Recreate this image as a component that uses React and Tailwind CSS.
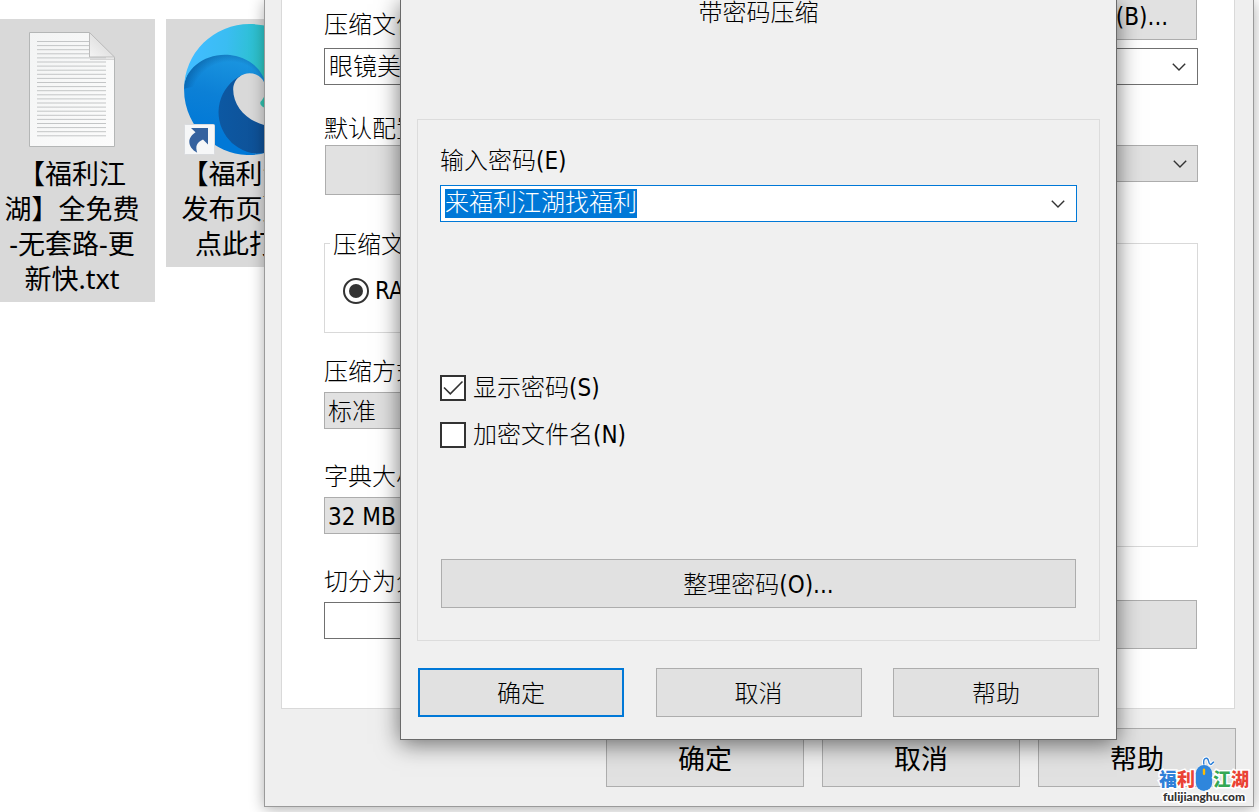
import React, { useEffect, useRef } from "react";

const dialogFont = "font-['DejaVu_Sans_Condensed','Noto_Sans_CJK_SC',sans-serif] font-light text-[24px] leading-[28px] text-black";
const shellFont = "font-['Noto_Sans','Noto_Sans_CJK_SC',sans-serif] text-[27px] leading-[35px] text-black";
const button = "flex items-center justify-center border border-[#adadad] bg-[#e1e1e1]";

function Chevron() {
  return (
    <svg className="pointer-events-none h-2 w-3.5 shrink-0" viewBox="0 0 14 8" fill="none" stroke="#333" strokeWidth="1.4" aria-hidden="true">
      <path d="M.8.8 7 7 13.2.8" />
    </svg>
  );
}

function Select({ id, options, className = "" }) {
  return (
    <div className={"grid h-[37px] items-center " + className}>
      <select id={id} className="col-start-1 row-start-1 h-full w-full appearance-none border border-[#adadad] bg-[#e1e1e1] px-[3px] pt-0.5">
        {options.map((o) => (
          <option key={o}>{o}</option>
        ))}
      </select>
      <div className="col-start-1 row-start-1 justify-self-end pr-[11px]">
        <Chevron />
      </div>
    </div>
  );
}

function Check({ label, ...props }) {
  return (
    <label className="flex items-center gap-[7px]">
      <span className="grid size-[26px]">
        <input type="checkbox" className="peer col-start-1 row-start-1 size-[26px] appearance-none border-2 border-[#333] bg-white" {...props} />
        <svg viewBox="0 0 26 26" className="pointer-events-none invisible col-start-1 row-start-1 size-[26px] peer-checked:visible" fill="none" stroke="#333" strokeWidth="1.6" aria-hidden="true">
          <path d="M4 12.5 10.3 18.8 22.5 6.5" />
        </svg>
      </span>
      {label}
    </label>
  );
}

function TextFileIcon() {
  const lines = Array.from({ length: 24 }, (_, i) => 10 + i * 4.1);
  return (
    <svg className="h-[117px] w-[88px]" viewBox="0 0 88 117" aria-hidden="true">
      <defs>
        <linearGradient id="sheet" x1="0" y1="0" x2="1" y2="1">
          <stop offset="0" stopColor="#f3f4f4" />
          <stop offset="1" stopColor="#fcfcfc" />
        </linearGradient>
        <linearGradient id="fold" x1="0" y1="1" x2="1" y2="0">
          <stop offset="0" stopColor="#f4f4f4" />
          <stop offset="1" stopColor="#d2d2d2" />
        </linearGradient>
      </defs>
      <path d="M1.5 1.5h60l25 25v89h-85z" fill="url(#sheet)" stroke="#b4b6b6" />
      {lines.map((y, i) => (
        <path key={i} d={"M9 " + (y + 0.5) + "H" + (i < 4 ? 61 : 78)} stroke="#c3c5c6" strokeWidth="1" />
      ))}
      <path d="M62 27.5h24v1.5H62z" fill="#d5d5d5" />
      <path d="M61.5 1.5v24.5h25z" fill="url(#fold)" stroke="#bcbcbc" />
    </svg>
  );
}

function BrowserIcon() {
  return (
    <svg className="size-[131px]" viewBox="0 0 256 256" aria-hidden="true">
      <defs>
        <linearGradient id="deep" x1="58" y1="177" x2="240" y2="177" gradientUnits="userSpaceOnUse">
          <stop offset="0" stopColor="#0c59a4" />
          <stop offset="1" stopColor="#114a8b" />
        </linearGradient>
        <linearGradient id="mid" x1="90" y1="60" x2="50" y2="220" gradientUnits="userSpaceOnUse">
          <stop offset="0" stopColor="#1b96e0" />
          <stop offset=".5" stopColor="#0c80d6" />
          <stop offset="1" stopColor="#0078d7" />
        </linearGradient>
        <linearGradient id="top" x1="20" y1="80" x2="256" y2="100" gradientUnits="userSpaceOnUse">
          <stop offset="0" stopColor="#40bdff" />
          <stop offset=".25" stopColor="#3abdf2" />
          <stop offset=".45" stopColor="#2fc0d6" />
          <stop offset=".55" stopColor="#2dc3c8" />
          <stop offset=".62" stopColor="#33c29a" />
          <stop offset=".85" stopColor="#3cc458" />
          <stop offset="1" stopColor="#66eb6e" />
        </linearGradient>
        <radialGradient id="shade" cx="90" cy="150" r="95" gradientUnits="userSpaceOnUse">
          <stop offset=".8" stopColor="#003a75" stopOpacity="0" />
          <stop offset="1" stopColor="#003a75" stopOpacity=".35" />
        </radialGradient>
      </defs>
      <path fill="url(#deep)" d="M231 190.5c-3.4 1.8-6.9 3.4-10.5 4.7a101.5 101.5 0 0 1-35.9 6.4c-47.3 0-88.5-32.5-88.5-74.3.1-11.4 6.4-21.9 16.4-27.3-42.8 1.8-53.8 46.4-53.8 72.5 0 73.9 68.1 81.4 82.8 81.4 7.9 0 19.8-2.3 27-4.6l1.3-.4a128.3 128.3 0 0 0 66.6-52.8 4 4 0 0 0-5.4-5.6z" />
      <path fill="url(#mid)" d="M105.7 241.4a79.2 79.2 0 0 1-22.7-21.3 80.7 80.7 0 0 1 29.5-120c3.2-1.5 8.5-4.1 15.6-4a32.4 32.4 0 0 1 25.7 13 31.9 31.9 0 0 1 6.3 18.7c0-.2 24.5-79.6-80-79.6-43.9 0-80 41.6-80 78.2a130.2 130.2 0 0 0 12.1 56 128 128 0 0 0 156.4 67 75.5 75.5 0 0 1-62.8-8z" />
      <path fill="url(#shade)" d="M112.5 100.1c3.2-1.5 8.5-4.1 15.6-4a32.4 32.4 0 0 1 25.7 13 31.9 31.9 0 0 1 6.3 18.7c0-.2 24.5-79.6-80-79.6-43.9 0-80 41.6-80 78.2z" />
      <path fill="url(#top)" d="M152.3 148.9c-.8 1-3.3 2.5-3.3 5.7 0 2.6 1.7 5.1 4.7 7.2 14.4 10 41.5 8.7 41.6 8.7 10.7 0 21.1-2.9 30.3-8.3A61.4 61.4 0 0 0 256 109.2c.3-22.4-8-37.3-11.3-43.9C223.5 23.9 177.7 0 128 0A128 128 0 0 0 0 126.2c.5-36.5 36.8-66 80-66 3.5 0 23.5.3 42 10.1 16.3 8.6 24.9 18.9 30.8 29.2 6.2 10.7 7.3 24.1 7.3 29.5 0 5.3-2.7 13.3-7.8 19.9z" />
    </svg>
  );
}

function ShortcutBadge() {
  return (
    <svg className="absolute bottom-0 left-0 size-[31px]" viewBox="0 0 31 31" aria-hidden="true">
      <rect x=".5" y=".5" width="30" height="30" rx="1" fill="#f6f7f8" stroke="#d9dbde" />
      <path d="M7 4H24V20.5L19 15.5C12.2 18.7 11.4 22.4 13.2 28.7 8 26 5.3 22 5.3 17.800 5.300 14 8 10.500 11.500 8.300z" fill="#35629f" />
    </svg>
  );
}

function DesktopItem({ lines, children }) {
  return (
    <div className="flex w-[166px] shrink-0 flex-col items-center bg-[#d9d9d9] pt-[5px] pb-1.5">
      <div className="flex h-[132px] flex-col items-center">{children}</div>
      <div className={"whitespace-nowrap text-center " + shellFont}>
        {lines.map((l) => (
          <div key={l}>{l}</div>
        ))}
      </div>
    </div>
  );
}

function ArchiveWindow() {
  const big = button + " h-[59px] w-[198px] pt-0.5 " + shellFont;
  return (
    <section className="absolute top-0 right-[5px] left-[264px] border border-t-0 border-[#9a9a9a] bg-[#efefef] pr-[17px] pb-[19px] pl-4 shadow-[0_2px_14px_rgba(0,0,0,0.32)]">
      <div className={"mr-px border border-t-0 border-[#d9d9d9] bg-white pr-9 pb-[59px] pl-[42px] " + dialogFont}>
        <div className="flex h-10 justify-between">
          <label htmlFor="archive" className="pt-[11px]">压缩文件名(A)</label>
          <button className={button + " mr-px w-[158px] border-t-0 pb-1.5"}>浏览(B)...</button>
        </div>
        <div className="mt-2 flex h-[37px] items-center border border-[#707070] bg-white pr-[11px] pl-1">
          <input id="archive" defaultValue="眼镜美" className="min-w-0 flex-1 outline-none" />
          <Chevron />
        </div>

        <div className="mt-[30px] grid grid-cols-2 gap-10">
          <div>
            <div>默认配置</div>
            <button className={button + " mt-0.5 ml-px h-[50px] w-[300px]"}>配置(F)...</button>
          </div>
          <div>
            <label htmlFor="update" className="block">更新方式(U)</label>
            <Select id="update" options={["添加并替换文件"]} className="mt-0.5" />
          </div>
        </div>

        <div className="mt-8 grid grid-cols-2 gap-10">
          <div className="flex flex-col">
            <fieldset className="h-[106px] border border-[#d9d9d9]">
              <legend className="ml-[5px] px-[3px] pt-1">压缩文件格式</legend>
              <label className="mt-[18px] ml-[18px] flex items-center gap-1.5">
                <span className="grid size-[26px] place-items-center">
                  <input type="radio" name="format" defaultChecked className="peer col-start-1 row-start-1 size-[26px] appearance-none rounded-full border-2 border-[#333] bg-white" />
                  <span className="pointer-events-none invisible col-start-1 row-start-1 size-3.5 rounded-full bg-[#333] peer-checked:visible" />
                </span>
                RAR
              </label>
            </fieldset>
            <label htmlFor="method" className="mt-[25px]">压缩方式(C)</label>
            <Select id="method" options={["标准"]} className="mt-1.5" />
            <label htmlFor="dict" className="mt-[34px]">字典大小(D)</label>
            <Select id="dict" options={["32 MB"]} className="mt-1.5" />
            <label htmlFor="split" className="mt-[34px]">切分为分卷(V)</label>
            <input id="split" className="mt-1.5 h-[37px] border border-[#707070] bg-white px-1" />
          </div>
          <div className="flex flex-col">
            <fieldset className="h-[320px] border border-[#d9d9d9]">
              <legend className="ml-[5px] px-[3px] pt-1">压缩选项</legend>
            </fieldset>
            <button className={button + " mt-[53px] mr-px h-[49px]"}>设置密码(P)...</button>
          </div>
        </div>
      </div>
      <div className="mt-[19px] flex justify-end gap-[18px]">
        <button className={big}>确定</button>
        <button className={big}>取消</button>
        <button className={big}>帮助</button>
      </div>
    </section>
  );
}

function PasswordWindow() {
  const field = useRef(null);
  useEffect(() => {
    field.current.focus();
    field.current.select();
  }, []);
  return (
    <section className={"absolute top-0 left-[400px] w-[717px] border border-t-0 border-[#6a6a6a] bg-[#f0f0f0] px-4 pb-[22px] shadow-[0_4px_22px_rgba(0,0,0,0.55)] " + dialogFont}>
      <h1 className="text-center leading-[26px]">带密码压缩</h1>
      <div className="mt-[93px] flex flex-col border border-[#dcdcdc] px-[22px] pt-[27px] pb-8">
        <label htmlFor="password">输入密码(E)</label>
        <div className="mt-[10px] flex h-[37px] items-center border border-[#0078d7] bg-white pr-[11px] pl-1">
          <input
            id="password"
            ref={field}
            defaultValue="来福利江湖找福利"
            className="h-[29px] min-w-0 flex-1 leading-[29px] caret-transparent outline-none selection:bg-[#0078d7] selection:text-white"
          />
          <Chevron />
        </div>
        <div className="mt-[152px] flex flex-col gap-[19px]">
          <Check label="显示密码(S)" defaultChecked />
          <Check label="加密文件名(N)" />
        </div>
        <button className={button + " mx-px mt-[110px] h-[49px] pt-0.5"}>整理密码(O)...</button>
      </div>
      <div className="mt-[27px] flex justify-between px-px">
        <button className="flex h-[49px] w-[206px] items-center justify-center border-2 border-[#0078d7] bg-[#e1e1e1] pt-0.5">确定</button>
        <button className={button + " h-[49px] w-[206px] pt-0.5"}>取消</button>
        <button className={button + " h-[49px] w-[206px] pt-0.5"}>帮助</button>
      </div>
    </section>
  );
}

function Watermark() {
  const outline = "[paint-order:stroke_fill] [-webkit-text-stroke:3px_white]";
  const cable = "M9 9C8 4 9.500 2 11.500 2.200c3 .3 1.500 6.300 4 6.300 1.500 0 1.500-2 3.500-2.500";
  return (
    <div className="absolute right-[10px] bottom-[8px] flex flex-col items-center">
      <div className={"flex items-end font-['Noto_Sans_CJK_SC',sans-serif] text-[18px] leading-[24px] font-black " + outline}>
        <span className="text-[#2f80d8]">福</span>
        <span className="text-[#ea4335]">利</span>
        <svg className="h-[34px] w-[18px] overflow-visible" viewBox="0 0 18 34" aria-hidden="true">
          <path d={cable} fill="none" stroke="#fff" strokeWidth="3.5" />
          <path d={cable} fill="none" stroke="#2f80d8" strokeWidth="1.4" />
          <rect x=".8" y="9" width="16.4" height="26" rx="8.2" fill="#2f86dc" stroke="#fff" strokeWidth=".8" />
          <rect x="7.8" y="12.5" width="2.4" height="6.500" rx="1.2" fill="#fbbc05" />
        </svg>
        <span className="text-[#34a853]">江</span>
        <span className="text-[#ea4335]">湖</span>
      </div>
      <div className={"font-['Lato',sans-serif] text-[12px] leading-[14px] font-black text-[#333] " + outline}>fulijianghu.com</div>
    </div>
  );
}

export default function App() {
  return (
    <main className="relative min-h-screen overflow-hidden bg-white">
      <div className="-ml-[11px] flex items-start gap-[11px] pt-[19px]">
        <DesktopItem lines={["【福利江", "湖】全免费", "-无套路-更", "新快.txt"]}>
          <div className="pt-[7px]">
            <TextFileIcon />
          </div>
        </DesktopItem>
        <DesktopItem lines={["【福利江湖", "发布页】永", "点此打开"]}>
          <div className="relative">
            <BrowserIcon />
            <ShortcutBadge />
          </div>
        </DesktopItem>
      </div>
      <ArchiveWindow />
      <PasswordWindow />
      <Watermark />
    </main>
  );
}
